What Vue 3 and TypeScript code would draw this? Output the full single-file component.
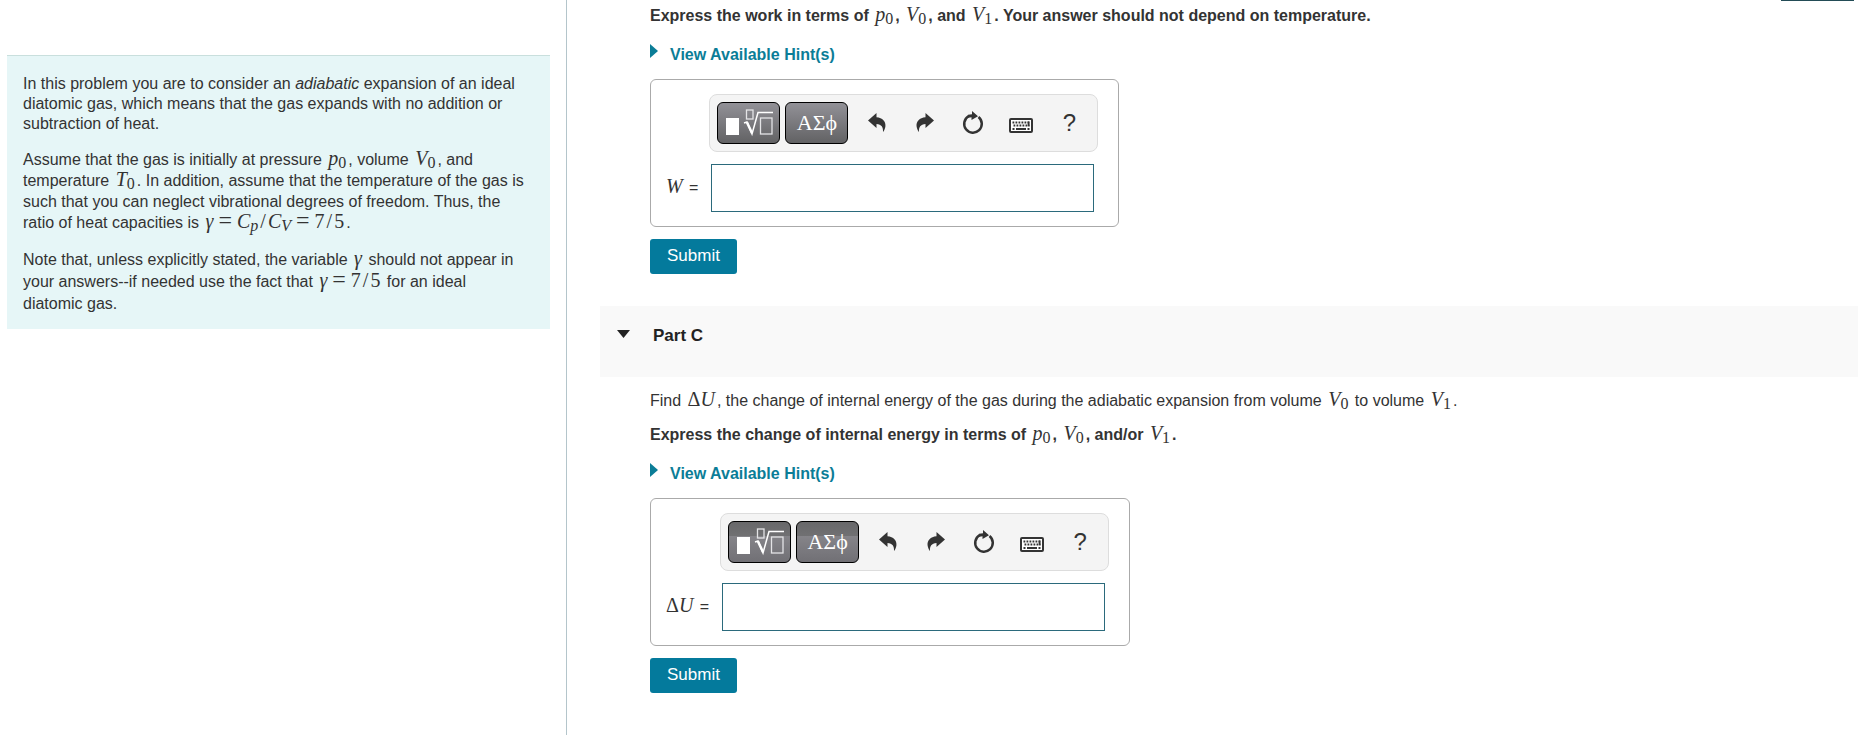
<script setup lang="ts">
import { ref } from 'vue'

const work = ref('')
const energy = ref('')
</script>

<template>
  <div class="page">
    <aside class="side">
      <section class="intro">
        <p class="plain">
          In this problem you are to consider an <em>adiabatic</em> expansion of an ideal
          diatomic gas, which means that the gas expands with no addition or subtraction of heat.
        </p>
        <p class="mixed">
          Assume that the gas is initially at pressure <span class="math"><i>p</i><sub>0</sub></span>, volume
          <span class="math"><i>V</i><sub>0</sub></span>, and temperature
          <span class="math"><i>T</i><sub>0</sub></span>. In addition, assume that the temperature of the gas is
          such that you can neglect vibrational degrees of freedom. Thus, the ratio of heat capacities is
          <span class="math"><i>γ</i> <span class="rel">=</span> <i>C</i><sub><i>p</i></sub><span class="over">/</span><i>C</i><sub><i>V</i></sub> <span class="rel">=</span> 7<span class="over">/</span>5</span>.
        </p>
        <p class="loose">
          Note that, unless explicitly stated, the variable <span class="math"><i>γ</i></span> should not appear in
          your answers--if needed use the fact that <span class="math"><i>γ</i> <span class="rel">=</span> 7<span class="over">/</span>5</span> for an ideal diatomic gas.
        </p>
      </section>
    </aside>

    <main class="content">
      <div class="top-edge"></div>

      <section class="part part-b">
        <p class="instruction">
          Express the work in terms of <span class="math"><i>p</i><sub>0</sub></span>,
          <span class="math"><i>V</i><sub>0</sub></span>, and
          <span class="math"><i>V</i><sub>1</sub></span>. Your answer should not depend on temperature.
        </p>
        <a class="hints" href="#hints-b">
          <svg width="8" height="14" viewBox="0 0 8 14" aria-hidden="true"><path d="M0 0L8 7L0 14Z" fill="#0b7d97" /></svg>
          View Available Hint(s)
        </a>
        <div class="answer">
          <div class="toolbar">
            <button class="key" type="button" aria-label="Templates">
              <svg width="48" height="28" viewBox="0 0 48 28" aria-hidden="true">
                <rect x="1" y="9" width="13" height="17" fill="#fff" />
                <path d="M19 14l3-1 5 12L33 3.500H49" fill="none" stroke="#fff" stroke-width="1.500" />
                <path d="M22 13.500l5 10.500" stroke="#fff" stroke-width="2.500" />
                <rect x="21.500" y="1" width="6.500" height="9" fill="none" stroke="#e4e4e6" stroke-width="1.300" />
                <rect x="35.500" y="9" width="11.500" height="16" fill="none" stroke="#e4e4e6" stroke-width="1.300" />
              </svg>
            </button>
            <button class="key greek" type="button">ΑΣϕ</button>
            <button class="tool" type="button" aria-label="Undo">
              <svg width="18" height="20" viewBox="0 0 18 20" aria-hidden="true"><path d="M0 7.500L8.500 0V4.200C14.500 4.500 18 8.500 17.400 13.500C17.100 15.700 16.200 17.800 15 19C15.400 14.300 13.500 11.200 8.500 11V15Z" fill="#333" /></svg>
            </button>
            <button class="tool" type="button" aria-label="Redo">
              <svg width="18" height="20" viewBox="0 0 18 20" aria-hidden="true"><path d="M18 7.500L9.500 0V4.200C3.500 4.500 0 8.500 .6 13.500C.9 15.700 1.800 17.800 3 19C2.600 14.300 4.500 11.200 9.500 11V15Z" fill="#333" /></svg>
            </button>
            <button class="tool" type="button" aria-label="Reset">
              <svg width="22" height="24" viewBox="0 0 22 24" aria-hidden="true"><path d="M6.500 5.300A8.800 8.800 0 1 0 16.500 6" fill="none" stroke="#333" stroke-width="2.500" /><path d="M10 0L16 5.200L9.500 9V6.200L5 7L6 3.800L10 3.300Z" fill="#333" /></svg>
            </button>
            <button class="tool" type="button" aria-label="Keyboard shortcuts">
              <svg class="low" width="24" height="15" viewBox="0 0 24 15" aria-hidden="true"><rect x="1" y="1" width="22" height="13" rx="1" fill="#fff" stroke="#333" stroke-width="2" /><path d="M3.500 4.500H20.500M4.500 7.500H20.500" stroke="#333" stroke-width="1.800" stroke-dasharray="1.800 1.200" /><path d="M19.600 3.500V8.200M3.500 11H5.500M7 11H17M18.500 11H20.500" stroke="#333" stroke-width="1.800" /></svg>
            </button>
            <button class="tool help" type="button" aria-label="Help">?</button>
          </div>
          <label class="lhs" for="answer-b"><span class="math"><i>W</i></span> =</label>
          <input id="answer-b" v-model="work" class="field" type="text" />
        </div>
        <button class="submit" type="button">Submit</button>
      </section>

      <header class="part-header">
        <svg width="13" height="8" viewBox="0 0 13 8" aria-hidden="true"><path d="M0 0H13L6.500 8Z" fill="#222" /></svg>
        <h2>Part C</h2>
      </header>

      <section class="part">
        <p class="question">
          Find <span class="math">Δ<i>U</i></span>, the change of internal energy of the gas during the adiabatic expansion from volume
          <span class="math"><i>V</i><sub>0</sub></span> to volume <span class="math"><i>V</i><sub>1</sub></span>.
        </p>
        <p class="instruction">
          Express the change of internal energy in terms of <span class="math"><i>p</i><sub>0</sub></span>,
          <span class="math"><i>V</i><sub>0</sub></span>, and/or
          <span class="math"><i>V</i><sub>1</sub></span>.
        </p>
        <a class="hints" href="#hints-c">
          <svg width="8" height="14" viewBox="0 0 8 14" aria-hidden="true"><path d="M0 0L8 7L0 14Z" fill="#0b7d97" /></svg>
          View Available Hint(s)
        </a>
        <div class="answer split">
          <div class="toolbar">
            <button class="key" type="button" aria-label="Templates">
              <svg width="48" height="28" viewBox="0 0 48 28" aria-hidden="true">
                <rect x="1" y="9" width="13" height="17" fill="#fff" />
                <path d="M19 14l3-1 5 12L33 3.500H49" fill="none" stroke="#fff" stroke-width="1.500" />
                <path d="M22 13.500l5 10.500" stroke="#fff" stroke-width="2.500" />
                <rect x="21.500" y="1" width="6.500" height="9" fill="none" stroke="#e4e4e6" stroke-width="1.300" />
                <rect x="35.500" y="9" width="11.500" height="16" fill="none" stroke="#e4e4e6" stroke-width="1.300" />
              </svg>
            </button>
            <button class="key greek" type="button">ΑΣϕ</button>
            <button class="tool" type="button" aria-label="Undo">
              <svg width="18" height="20" viewBox="0 0 18 20" aria-hidden="true"><path d="M0 7.500L8.500 0V4.200C14.500 4.500 18 8.500 17.400 13.500C17.100 15.700 16.200 17.800 15 19C15.400 14.300 13.500 11.200 8.500 11V15Z" fill="#333" /></svg>
            </button>
            <button class="tool" type="button" aria-label="Redo">
              <svg width="18" height="20" viewBox="0 0 18 20" aria-hidden="true"><path d="M18 7.500L9.500 0V4.200C3.500 4.500 0 8.500 .6 13.500C.9 15.700 1.800 17.800 3 19C2.600 14.300 4.500 11.200 9.500 11V15Z" fill="#333" /></svg>
            </button>
            <button class="tool" type="button" aria-label="Reset">
              <svg width="22" height="24" viewBox="0 0 22 24" aria-hidden="true"><path d="M6.500 5.300A8.800 8.800 0 1 0 16.500 6" fill="none" stroke="#333" stroke-width="2.500" /><path d="M10 0L16 5.200L9.500 9V6.200L5 7L6 3.800L10 3.300Z" fill="#333" /></svg>
            </button>
            <button class="tool" type="button" aria-label="Keyboard shortcuts">
              <svg class="low" width="24" height="15" viewBox="0 0 24 15" aria-hidden="true"><rect x="1" y="1" width="22" height="13" rx="1" fill="#fff" stroke="#333" stroke-width="2" /><path d="M3.500 4.500H20.500M4.500 7.500H20.500" stroke="#333" stroke-width="1.800" stroke-dasharray="1.800 1.200" /><path d="M19.600 3.500V8.200M3.500 11H5.500M7 11H17M18.500 11H20.500" stroke="#333" stroke-width="1.800" /></svg>
            </button>
            <button class="tool help" type="button" aria-label="Help">?</button>
          </div>
          <label class="lhs" for="answer-c"><span class="math">Δ<i>U</i></span> =</label>
          <input id="answer-c" v-model="energy" class="field" type="text" />
        </div>
        <button class="submit" type="button">Submit</button>
      </section>
    </main>
  </div>
</template>

<style>
body {
  margin: 0;
  background: #fff;
}
</style>

<style scoped>
* {
  box-sizing: border-box;
}

.page {
  display: grid;
  grid-template-columns: 567fr 1305fr;
  min-height: 100vh;
  font-family: "Liberation Sans", Arial, sans-serif;
  font-size: 16px;
  color: #333;
}

.side {
  border-right: 1px solid #b4c5cb;
  padding: 55px 16px 0 7px;
}

.intro {
  background: #e6f6f7;
  border-top: 1px solid #c9dfdd;
  padding: 18px 20px 14px 16px;
}

p,
h2 {
  margin: 0;
}

.plain {
  line-height: 20px;
}

.mixed {
  margin-top: 15px;
  line-height: 21px;
}

.loose {
  margin-top: 16px;
  line-height: 22px;
}

.math {
  margin: 0 2px;
  font-family: "Liberation Serif", "Times New Roman", serif;
  font-size: 20px;
  font-weight: 400;
  line-height: 1px;
  white-space: nowrap;
}

.math sub {
  font-size: 16px;
  line-height: 1px;
  vertical-align: -3px;
}

.rel {
  font-size: 24px;
  line-height: 1px;
}

.over {
  margin: 0 2px;
}

.content {
  padding-right: 14px;
}

.top-edge {
  height: 1px;
  width: 73px;
  margin: 0 4px 0 auto;
  background: #234c56;
}

.part {
  display: flex;
  flex-direction: column;
  align-items: flex-start;
  padding: 13px 0 0 83px;
}

.part-b {
  padding-top: 4px;
}

.question {
  margin-bottom: 12px;
  line-height: 22px;
}

.instruction {
  font-weight: 700;
  line-height: 22px;
}

.hints {
  display: flex;
  gap: 12px;
  margin-top: 17px;
  color: #0b7d97;
  font-weight: 700;
  line-height: 22px;
  text-decoration: none;
}

.answer {
  display: grid;
  grid-template-columns: auto auto;
  align-items: center;
  row-gap: 12px;
  margin-top: 13px;
  padding: 14px 20px 14px 15px;
  border: 1px solid #aaa;
  border-radius: 6px;
}

.toolbar {
  grid-column: 2;
  display: flex;
  align-items: center;
  height: 58px;
  padding: 0 4px 0 7px;
  background: #f4f4f4;
  border: 1px solid #ddd;
  border-radius: 8px;
}

button {
  border: 0;
  padding: 0;
  background: none;
  font-family: inherit;
  color: #333;
}

.key {
  display: flex;
  align-items: center;
  justify-content: center;
  width: 63px;
  height: 42px;
  margin-right: 5px;
  border: 1px solid #000;
  border-radius: 6px;
  background: linear-gradient(#929197, #626264);
  color: #fff;
}

.split .key {
  background: linear-gradient(#68686a 0, #707072 34%, #858489 35%, #717075 100%);
}

.greek {
  font-family: "Liberation Serif", "DejaVu Serif", serif;
  font-size: 22px;
}

.tool {
  display: flex;
  align-items: center;
  justify-content: center;
  width: 48px;
  height: 42px;
}

.low {
  margin-top: 5px;
}

.help {
  font-size: 24px;
}

.lhs {
  padding-right: 11px;
  line-height: 22px;
}

.lhs .math {
  margin-left: 0;
}

.field {
  justify-self: start;
  width: 383px;
  height: 48px;
  margin-left: 2px;
  padding: 0 8px;
  border: 1px solid #2b6a7c;
  background: #fff;
  font-size: 20px;
  outline: 0;
}

.submit {
  width: 87px;
  height: 35px;
  margin-top: 12px;
  padding-bottom: 2px;
  border-radius: 3px;
  background: #047a9c;
  color: #fff;
  font-size: 17px;
}

.part-header {
  display: flex;
  align-items: flex-start;
  gap: 23px;
  height: 71px;
  margin: 32px 0 0 33px;
  padding: 24px 17px;
  background: #f9f9f9;
}

h2 {
  margin-top: -5px;
  font-size: 17px;
  line-height: 22px;
  color: #222;
}
</style>
